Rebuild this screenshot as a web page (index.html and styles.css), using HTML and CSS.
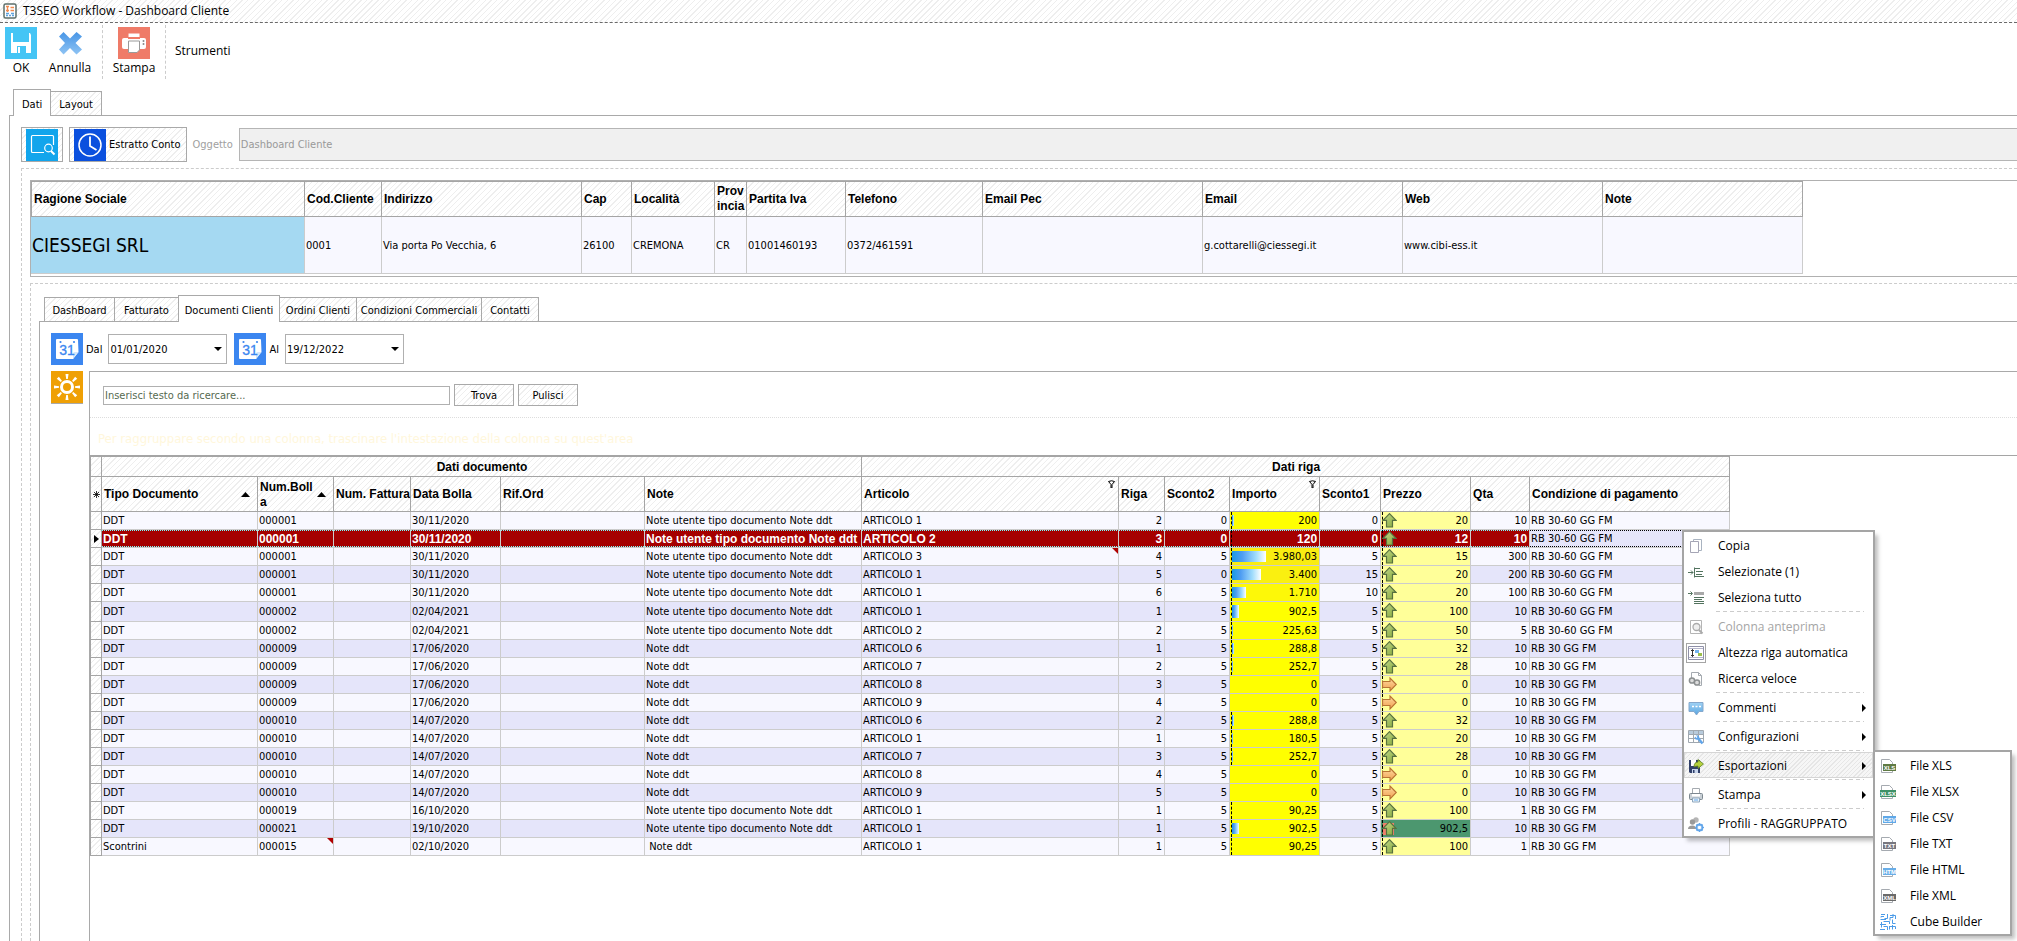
FILE: index.html
```html
<!DOCTYPE html>
<html lang="it">
<head>
<meta charset="utf-8">
<title>T3SEO Workflow - Dashboard Cliente</title>
<link rel="stylesheet" href="styles.css">
</head>
<body>
<svg class="defs" aria-hidden="true">
  <defs>
    <linearGradient id="green" x1="0" y1="0" x2="1" y2="1"><stop offset="0" stop-color="#c4d98a"/><stop offset="1" stop-color="#84a83c"/></linearGradient>
    <linearGradient id="orange" x1="0" y1="0" x2="0" y2="1"><stop offset="0" stop-color="#ffd9a0"/><stop offset="1" stop-color="#f0a050"/></linearGradient>
    <linearGradient id="blue" x1="0" y1="0" x2="0" y2="1"><stop offset="0" stop-color="#4795e6"/><stop offset="1" stop-color="#8fc4f4"/></linearGradient>
    <linearGradient id="bubble" x1="0" y1="0" x2="0" y2="1"><stop offset="0" stop-color="#9fd2f5"/><stop offset="1" stop-color="#5aa5e0"/></linearGradient>
  </defs>
  <symbol id="arrow-up" viewBox="0 0 15 15"><path d="M7.500 .7 14 7.300H10.500V14H4.500V7.300H1Z" fill="url(#green)" stroke="#56703f" stroke-width="1.200"/></symbol>
  <symbol id="arrow-side" viewBox="0 0 15 15"><path d="M14.300 7.500 8 1V4.500H.6V10.500H8V14Z" fill="url(#orange)" stroke="#b87333" stroke-width="1.100"/></symbol>
  <symbol id="calendar" viewBox="0 0 32 32"><rect width="32" height="32" fill="#3b86f0"/><path d="M6 6H26Q27 6 27 7L27.500 19 22 26H6Q5 26 5 25L5 7Q5 6 6 6Z" fill="#fff"/><path d="M27.500 19 22 26V20.500Q22 19 23.500 19Z" fill="#d5e6fc"/><circle cx="9.500" cy="9" r="1.100" fill="#3b86f0"/><circle cx="23" cy="9" r="1.100" fill="#3b86f0"/></symbol>
</svg>

<header class="titlebar hatch">
  <svg width="14" height="16" viewBox="0 0 14 16" aria-hidden="true"><rect x="1" y="1" width="12" height="14" rx="1.500" fill="#fff" stroke="#5c6f6b" stroke-width="1.500"/><path d="M3 3.500H6M7.500 4.500H11M4.500 4V9M3 7.500H6M7.500 7.500H11" stroke="#f08a50" stroke-width="1.300"/><path d="M3 10.500H6M8 10.500H11M3 12.500H5M6 12.500H8M9 12.500H11" stroke="#5fa3dd" stroke-width="1.300"/></svg>
  <h1>T3SEO Workflow - Dashboard Cliente</h1>
</header>

<nav class="toolbar">
  <button class="tool tool-ok"><svg width="32" height="32" viewBox="0 0 32 32" aria-hidden="true"><rect width="32" height="32" fill="#45c5f5"/><path d="M6 6H8V15H24V6H25L26 8V26H21V19H12V26H6Z" fill="#fff"/><path d="M13 20H15V26H13Z" fill="#fff"/></svg>OK</button>
  <button class="tool tool-cancel"><svg width="32" height="32" viewBox="0 0 32 32" aria-hidden="true"><path d="M9.500 5 16 11.500 22.500 5 28 9.500 21.500 16 28 22.500 22.500 27.500 16 21 9.500 27.500 5 22.500 11 16 5 9.500Z" fill="url(#blue)"/></svg>Annulla</button>
  <button class="tool tool-print"><svg width="32" height="32" viewBox="0 0 32 32" aria-hidden="true"><rect width="32" height="32" fill="#ef7b68"/><path d="M10.500 6.500H21.500V10H10.500Z" fill="#fff"/><rect x="4" y="11" width="24" height="11" rx="2" fill="#fff"/><path d="M10.500 14H21.500V23L19 25.500H10.500Z" fill="#fff" stroke="#9a9a9a"/><path d="M10 11.500H22" stroke="#ef7b68"/><circle cx="25.500" cy="14" r="1" fill="#888"/><circle cx="25.500" cy="17" r="1" fill="#888"/></svg>Stampa</button>
  <button class="tool-text">Strumenti</button>
</nav>

<div class="tabs tabs-main" role="tablist">
  <button class="tab active" role="tab" aria-selected="true">Dati</button>
  <button class="tab hatch" role="tab">Layout</button>
</div>

<main class="page">
  <div class="actions">
    <button class="action hatch" aria-label="Cerca"><svg width="32" height="32" viewBox="0 0 32 32" aria-hidden="true"><rect width="32" height="32" fill="#12a5ec"/><path d="M18 23.500H6.500Q5.500 23.500 5.500 22.500V7.500Q5.500 6.500 6.500 6.500H26.500Q27.500 6.500 27.500 7.500V16" fill="none" stroke="#fff" stroke-width="1.200"/><circle cx="22.500" cy="19" r="3.800" fill="none" stroke="#fff" stroke-width="1.200"/><path d="M25 22 28.500 25.500" stroke="#fff" stroke-width="2"/></svg></button>
    <button class="action hatch"><svg width="32" height="32" viewBox="0 0 32 32" aria-hidden="true"><rect width="32" height="32" fill="#0b50de"/><circle cx="16" cy="16" r="11" fill="none" stroke="#fff" stroke-width="1.500"/><path d="M16 7.500V17L22.500 21" fill="none" stroke="#fff" stroke-width="1.800"/></svg><span>Estratto Conto</span></button>
    <label for="subject">Oggetto</label>
    <input id="subject" class="subject" type="text" value="Dashboard Cliente" disabled>
  </div>

  <section class="outer">
    <div class="customer">
      <table class="customer-table">
        <colgroup><col class="w274"><col class="w77"><col class="w200"><col class="w50"><col class="w83"><col class="w32"><col class="w99"><col class="w137"><col class="w220"><col class="w200"><col class="w200"><col class="w200"></colgroup>
        <thead><tr class="hatch"><th>Ragione Sociale</th><th>Cod.Cliente</th><th>Indirizzo</th><th>Cap</th><th>Località</th><th>Prov<wbr>incia</th><th>Partita Iva</th><th>Telefono</th><th>Email Pec</th><th>Email</th><th>Web</th><th>Note</th></tr></thead>
        <tbody><tr><td class="company">CIESSEGI SRL</td><td>0001</td><td>Via porta Po Vecchia, 6</td><td>26100</td><td>CREMONA</td><td>CR</td><td>01001460193</td><td>0372/461591</td><td></td><td>g.cottarelli@ciessegi.it</td><td>www.cibi-ess.it</td><td></td></tr></tbody>
      </table>
    </div>

    <section class="inner">
      <div class="tabs tabs-inner" role="tablist">
        <button class="tab hatch w71" role="tab">DashBoard</button>
        <button class="tab hatch w65" role="tab">Fatturato</button>
        <button class="tab active w102" role="tab" aria-selected="true">Documenti Clienti</button>
        <button class="tab hatch w78" role="tab">Ordini Clienti</button>
        <button class="tab hatch w126" role="tab">Condizioni Commerciali</button>
        <button class="tab hatch w58" role="tab">Contatti</button>
      </div>
      <div class="panel">
        <div class="dates">
          <svg width="32" height="32" viewBox="0 0 32 32" aria-hidden="true"><use href="#calendar"/><text x="16" y="22" text-anchor="middle" class="cal-num">31</text></svg>
          <label for="from">Dal</label>
          <div class="combo"><select id="from"><option>01/01/2020</option></select><svg width="8" height="4" viewBox="0 0 8 4" aria-hidden="true"><path d="M0 0H8L4 4Z"/></svg></div>
          <svg width="32" height="32" viewBox="0 0 32 32" aria-hidden="true"><use href="#calendar"/><text x="16" y="22" text-anchor="middle" class="cal-num">31</text></svg>
          <label for="to">Al</label>
          <div class="combo"><select id="to"><option>19/12/2022</option></select><svg width="8" height="4" viewBox="0 0 8 4" aria-hidden="true"><path d="M0 0H8L4 4Z"/></svg></div>
        </div>
        <div class="grid-area">
          <button class="sun" aria-label="Opzioni"><svg width="32" height="32" viewBox="0 0 32 32" aria-hidden="true"><rect width="32" height="32" fill="#efa005"/><circle cx="16" cy="16" r="5.500" fill="none" stroke="#fff" stroke-width="3"/><g fill="#fff"><path id="ray" d="M14.500 3H17.500L16.800 8H15.200Z"/><use href="#ray" transform="rotate(45 16 16)"/><use href="#ray" transform="rotate(90 16 16)"/><use href="#ray" transform="rotate(135 16 16)"/><use href="#ray" transform="rotate(180 16 16)"/><use href="#ray" transform="rotate(225 16 16)"/><use href="#ray" transform="rotate(270 16 16)"/><use href="#ray" transform="rotate(315 16 16)"/></g></svg></button>
          <div class="grid">
            <form class="search">
              <input type="text" aria-label="Ricerca" placeholder="Inserisci testo da ricercare...">
              <button type="button" class="hatch">Trova</button>
              <button type="button" class="hatch">Pulisci</button>
            </form>
            <p class="group-hint">Per raggruppare secondo una colonna, trascinare l'intestazione della colonna su quest'area</p>
            <div class="table-frame">
              <table class="docs">
                <colgroup><col class="w12"><col class="w156"><col class="w76"><col class="w77"><col class="w90"><col class="w144"><col class="w217"><col class="w257"><col class="w46"><col class="w65"><col class="w90"><col class="w61"><col class="w90"><col class="w59"><col class="w200"></colgroup>
                <thead class="hatch">
                  <tr class="bands"><th></th><th colspan="6">Dati documento</th><th colspan="8">Dati riga</th></tr>
                  <tr class="heads">
                    <th class="mark"><svg width="7" height="7" viewBox="0 0 7 7" aria-hidden="true"><path d="M3.500 0V7M0 3.500H7M1 1 6 6M6 1 1 6" stroke="#000" stroke-width=".8"/></svg></th>
                    <th class="sorted">Tipo Documento<svg width="9" height="5" viewBox="0 0 9 5" aria-hidden="true"><path d="M0 5H9L4.500 0Z"/></svg></th>
                    <th class="sorted">Num.Boll<wbr>a<svg width="9" height="5" viewBox="0 0 9 5" aria-hidden="true"><path d="M0 5H9L4.500 0Z"/></svg></th>
                    <th class="single">Num. Fattura</th><th>Data Bolla</th><th>Rif.Ord</th><th>Note</th>
                    <th class="filtered">Articolo<svg width="7" height="8" viewBox="0 0 7 8" aria-hidden="true"><path d="M.5 1.500Q3.500 0 6.500 1.500L4 4.500V8H3V4.500Z" fill="none" stroke="#000"/></svg></th>
                    <th>Riga</th><th>Sconto2</th>
                    <th class="filtered">Importo<svg width="7" height="8" viewBox="0 0 7 8" aria-hidden="true"><path d="M.5 1.500Q3.500 0 6.500 1.500L4 4.500V8H3V4.500Z" fill="none" stroke="#000"/></svg></th>
                    <th>Sconto1</th><th>Prezzo</th><th>Qta</th><th>Condizione di pagamento</th>
                  </tr>
                </thead>
                <tbody id="rows"></tbody>
              </table>
            </div>
          </div>
        </div>
      </div>
    </section>
  </section>
</main>

<ul class="menu menu-context">
  <li><button><svg width="16" height="16" viewBox="0 0 16 16" aria-hidden="true"><path d="M5.500 1.500H13.500V12.500H5.500Z" fill="#fff" stroke="#a9b3c0"/><path d="M2.500 3.500H10.500V14.500H2.500Z" fill="#fff" stroke="#a5a5b5"/></svg>Copia</button></li>
  <li><button><svg width="16" height="16" viewBox="0 0 16 16" aria-hidden="true"><path d="M0 8.500H5M3 6.500 5 8.500 3 10.500M6.500 3.500V13.500M7 4.500H12M8 7.500H15M8 10.500H14M7 12.500H16" fill="none" stroke="#53735f"/></svg>Selezionate (1)</button></li>
  <li><button><svg width="16" height="16" viewBox="0 0 16 16" aria-hidden="true"><path d="M0 3.500H4M2.500 1.500 4.500 3.500 2.500 5.500M6 7.500H16M6 9.500H14M6 11.500H16M6 13.500H16" fill="none" stroke="#53735f"/><path d="M6 2H16V5H6Z" fill="#a9a9a9"/></svg>Seleziona tutto</button></li>
  <li class="sep" role="separator"></li>
  <li><button disabled><svg width="16" height="16" viewBox="0 0 16 16" aria-hidden="true"><path d="M2.500 1.500H13.500V14.500H2.500Z" fill="#fff" stroke="#b5b5b5"/><circle cx="8.500" cy="8" r="3.500" fill="#eee" stroke="#aaa" stroke-width="1.300"/><path d="M11 11 14.500 14.500" stroke="#aaa" stroke-width="2"/></svg>Colonna anteprima</button></li>
  <li><button><svg class="checked" width="20" height="20" viewBox="0 0 20 20" aria-hidden="true"><rect x=".5" y=".5" width="19" height="19" fill="#fff" stroke="#a5a5a5"/><path d="M2.500 3.500H17.500V16.500H2.500Z" fill="#fff" stroke="#8f90a8"/><path d="M3 5.500H17M3 14.500H17" stroke="#b5b5cc"/><path d="M6.500 6.500V13.500M5 8 6.500 6.500 8 8M5 12 6.500 13.500 8 12" fill="none" stroke="#333"/><path d="M9 7H13V10H9Z" fill="#72b3ee"/><path d="M12 10H16V13H12Z" fill="#9bbf4a"/></svg>Altezza riga automatica</button></li>
  <li><button><svg width="16" height="16" viewBox="0 0 16 16" aria-hidden="true"><path d="M3.500 7V1.500H10.500L13.500 4.500V14.500H11" fill="#fff" stroke="#a5aab0"/><path d="M10.500 1.500V4.500H13.500" fill="none" stroke="#a5aab0"/><circle cx="4" cy="9.500" r="2.600" fill="#ddd" stroke="#8b8f90" stroke-width="1.500"/><circle cx="9" cy="11.500" r="2.600" fill="#ddd" stroke="#8b8f90" stroke-width="1.500"/></svg>Ricerca veloce</button></li>
  <li class="sep" role="separator"></li>
  <li><button><svg width="16" height="16" viewBox="0 0 16 16" aria-hidden="true"><path d="M1 2.500H15V11.500H11L8.500 15 6 11.500H1Z" fill="url(#bubble)" stroke="#85a8cc"/><path d="M4 6.500H6M7.500 6.500H9.500M11 6.500H13" stroke="#fff" stroke-width="1.500"/></svg>Commenti<i class="more"></i></button></li>
  <li class="sep" role="separator"></li>
  <li><button><svg width="16" height="16" viewBox="0 0 16 16" aria-hidden="true"><path d="M.5 1.500H15.500V13.500H.5Z" fill="#fff" stroke="#a0a8b0"/><path d="M1 2H15V5H1Z" fill="#b8cbdc"/><path d="M.5 5.500H15.500M.5 9.500H15.500M5.500 1.500V13.500M10.500 1.500V13.500" stroke="#a0a8b0"/><path d="M9 8 14.500 14.500" stroke="#61a5ea" stroke-width="2.500"/><circle cx="9" cy="8.500" r="2.300" fill="#61a5ea"/><path d="M7 6.500 9 8.500" stroke="#fff" stroke-width="1.500"/></svg>Configurazioni<i class="more"></i></button></li>
  <li class="sep" role="separator"></li>
  <li><button class="current"><svg width="16" height="16" viewBox="0 0 16 16" aria-hidden="true"><path d="M1 2H12V15H2L1 14Z" fill="#31406a"/><path d="M3 2H8V8H3Z" fill="#fff"/><path d="M4 11H10V15H4Z" fill="#c7d5ec"/><path d="M5 12H6.500V15H5Z" fill="#31406a"/><path d="M6 9Q6 4 10 4V1.500L15.500 6 10 10.500V8Q7.500 8 6 9Z" fill="#b5d13c" stroke="#5c7d24" stroke-width=".8"/></svg>Esportazioni<i class="more"></i></button></li>
  <li class="sep" role="separator"></li>
  <li><button><svg width="16" height="16" viewBox="0 0 16 16" aria-hidden="true"><path d="M4.500 1.500H11.500V8H4.500Z" fill="#fff" stroke="#a5aab0"/><rect x="1.500" y="6.500" width="13" height="6" rx="1" fill="#c9d0d6" stroke="#7d8890"/><path d="M4 7H12V9.500H4Z" fill="#fff"/><path d="M4.500 11H11.500V15H4.500Z" fill="#eaf4fc" stroke="#8fa7bd"/><path d="M6 13H10" stroke="#61a5ea"/></svg>Stampa<i class="more"></i></button></li>
  <li class="sep" role="separator"></li>
  <li><button><svg width="16" height="16" viewBox="0 0 16 16" aria-hidden="true"><circle cx="8" cy="4" r="2.700" fill="#b5b5b5"/><circle cx="4.500" cy="6" r="2.700" fill="#999"/><path d="M0 13Q0 9.500 4.500 9.500 8 9.500 8 13Z" fill="#999"/><circle cx="11.500" cy="11.500" r="3" fill="#fff" stroke="#61a5ea" stroke-width="1.800"/><path d="M11.500 7V16M7 11.500H16M8.500 8.500 14.500 14.500M14.500 8.500 8.500 14.500" stroke="#61a5ea"/><circle cx="11.500" cy="11.500" r="1.800" fill="#fff"/></svg>Profili - RAGGRUPPATO</button></li>
</ul>

<ul class="menu menu-sub" id="exports"></ul>

<script src="app.js"></script>
</body>
</html>
```
FILE: app.js
```js
const ddt = "Note utente tipo documento Note ddt";
const rb60 = "RB 30-60 GG FM";
const rb30 = "RB 30 GG FM";

// type, number, date, note, item, line, discount 2, amount, bar width, discount 1, price, quantity, payment
const rows = [
  ["DDT", "000001", "30/11/2020", ddt, "ARTICOLO 1", 2, 0, "200", 2, 0, "20", 10, rb60],
  ["DDT", "000001", "30/11/2020", ddt, "ARTICOLO 2", 3, 0, "120", 0, 0, "12", 10, rb60],
  ["DDT", "000001", "30/11/2020", ddt, "ARTICOLO 3", 4, 5, "3.980,03", 34, 5, "15", 300, rb60],
  ["DDT", "000001", "30/11/2020", ddt, "ARTICOLO 1", 5, 0, "3.400", 29, 15, "20", 200, rb60],
  ["DDT", "000001", "30/11/2020", ddt, "ARTICOLO 1", 6, 5, "1.710", 14, 10, "20", 100, rb60],
  ["DDT", "000002", "02/04/2021", ddt, "ARTICOLO 1", 1, 5, "902,5", 7, 5, "100", 10, rb60],
  ["DDT", "000002", "02/04/2021", ddt, "ARTICOLO 2", 2, 5, "225,63", 1, 5, "50", 5, rb60],
  ["DDT", "000009", "17/06/2020", "Note ddt", "ARTICOLO 6", 1, 5, "288,8", 2, 5, "32", 10, rb30],
  ["DDT", "000009", "17/06/2020", "Note ddt", "ARTICOLO 7", 2, 5, "252,7", 1, 5, "28", 10, rb30],
  ["DDT", "000009", "17/06/2020", "Note ddt", "ARTICOLO 8", 3, 5, "0", 0, 5, "0", 10, rb30],
  ["DDT", "000009", "17/06/2020", "Note ddt", "ARTICOLO 9", 4, 5, "0", 0, 5, "0", 10, rb30],
  ["DDT", "000010", "14/07/2020", "Note ddt", "ARTICOLO 6", 2, 5, "288,8", 2, 5, "32", 10, rb30],
  ["DDT", "000010", "14/07/2020", "Note ddt", "ARTICOLO 1", 1, 5, "180,5", 1, 5, "20", 10, rb30],
  ["DDT", "000010", "14/07/2020", "Note ddt", "ARTICOLO 7", 3, 5, "252,7", 1, 5, "28", 10, rb30],
  ["DDT", "000010", "14/07/2020", "Note ddt", "ARTICOLO 8", 4, 5, "0", 0, 5, "0", 10, rb30],
  ["DDT", "000010", "14/07/2020", "Note ddt", "ARTICOLO 9", 5, 5, "0", 0, 5, "0", 10, rb30],
  ["DDT", "000019", "16/10/2020", ddt, "ARTICOLO 1", 1, 5, "90,25", 0, 5, "100", 1, rb30],
  ["DDT", "000021", "19/10/2020", ddt, "ARTICOLO 1", 1, 5, "902,5", 7, 5, "902,5", 10, rb30],
  ["Scontrini", "000015", "02/10/2020", "\u00a0Note ddt", "ARTICOLO 1", 1, 5, "90,25", 0, 5, "100", 1, rb30]
];
const shades = { 2: "shade-high", 3: "shade-mid", 4: "shade-low" };

document.getElementById("rows").innerHTML = rows.map((r, i) => {
  const [type, num, date, note, item, line, d2, amount, bar, d1, price, qty, pay] = r;
  const selected = i === 1;
  const corner = '<i class="corner"></i>';
  const arrow = price === "0" ? "side" : "up";
  const pointer = selected ? '<svg width="5" height="8" viewBox="0 0 5 8" aria-hidden="true"><path d="M0 0 5 4 0 8Z"/></svg>' : "";
  return `<tr class="${selected ? "selected" : ""} ${i === 5 ? "tall" : ""}">
    <td class="mark hatch">${pointer}</td>
    <td>${type}</td><td>${num}${i === 18 ? corner : ""}</td><td></td><td>${date}</td><td></td>
    <td>${note}</td><td>${item}${i === 2 ? corner : ""}</td>
    <td class="num">${line}</td><td class="num">${d2}</td>
    <td class="num amount ${amount === "0" ? "" : "axis"} ${shades[i] || ""}"><i class="bar" style="width:${bar}px"></i>${amount}</td>
    <td class="num">${d1}</td>
    <td class="num price axis ${i === 17 ? "peak" : ""}"><svg width="15" height="15" aria-hidden="true"><use href="#arrow-${arrow}"/></svg>${price}</td>
    <td class="num">${qty}</td><td class="pay">${pay}</td></tr>`;
}).join("");

const formats = [["XLS", "#5f7a43"], ["XLSX", "#3f9168"], ["CSV", "#5fa8e8"], ["TXT", "#77777f"], ["HTML", "#6aaee8"], ["XML", "#6a6a6a"]];
document.getElementById("exports").innerHTML = formats.map(([name, color]) => {
  const tag = name === "HTML" ? "HTM" : name;
  const x = tag.length === 4 ? 0 : 3;
  return `<li><button><svg width="16" height="16" viewBox="0 0 16 16" aria-hidden="true">
    <path d="M1.500 1.500H9.500L12.500 4.500V14.500H1.500Z" fill="#fff" stroke="#a5aab0"/>
    <rect x="${x}" y="6" width="${16 - x}" height="7" fill="${color}"/>
    <text class="tag" x="${x + (16 - x) / 2}" y="12" text-anchor="middle">${tag}</text></svg>File ${name}</button></li>`;
}).join("") + `<li><button><svg width="16" height="16" viewBox="0 0 16 16" aria-hidden="true">
  <path d="M1 .5H5M7.500 0V4.500H4.500M1 3.500V2.500H4M.5 5.500H6M10 1.500H15.500V5M13 0V3.500H10V6.500M1.500 8V13.500M3.500 7.500H9.500V10M0 10.500H6M12.500 5.500V9.500H15.500M3.500 12.500H7.500V16M9.500 12V15.500M9.500 12.500H15.500V15M12.500 11V15.500M0 15.500H5" fill="none" stroke="#4b9be8"/></svg>Cube Builder</button></li>`;
```
FILE: styles.css
```css
* { box-sizing: border-box; }
body {
  margin: 0;
  min-height: 100vh;
  display: flex;
  flex-direction: column;
  position: relative;
  overflow: hidden;
  background: #fff;
  color: #000;
  font: 11px/15px "DejaVu Sans Condensed", "Noto Sans", sans-serif;
}
button, input, select { font: inherit; color: inherit; border-radius: 0; margin: 0; }
button { background: none; border: 0; padding: 0; }
svg { display: block; flex: none; }
.defs { position: absolute; width: 0; height: 0; }
.cal-num { font: 14px "Liberation Sans", sans-serif; fill: #3b86f0; stroke: #3b86f0; stroke-width: .3px; }
.tag { font: bold 6px "Liberation Sans", sans-serif; fill: #fff; }
.hatch { background: repeating-linear-gradient(135deg, #fff 0 3px, #eee 3px 4px); }

.titlebar {
  display: flex;
  align-items: center;
  gap: 6px;
  height: 23px;
  padding: 0 3px;
  border-bottom: 1px dashed #6a6a6a;
}
.titlebar h1 { margin: 0; font: 12px/16px "Open Sans", sans-serif; }

.toolbar { display: flex; height: 66px; padding-top: 2px; font: 12px/16px "Open Sans", sans-serif; }
.tool { display: flex; flex-direction: column; align-items: center; gap: 1px; height: 54px; padding-top: 2px; }
.tool-ok { width: 42px; }
.tool-cancel { width: 61px; padding-right: 4px; border-right: 1px dashed #ccc; }
.tool-print { width: 63px; border-right: 1px dashed #ccc; }
.tool-text { height: 52px; padding: 0 9px; }

.tabs { display: flex; align-items: flex-end; height: 26px; }
.tabs-main { padding-left: 13px; }
.tabs-inner { padding-left: 13px; }
.tab { height: 24px; padding: 2px 0 0; border: 1px solid #a9a9a9; border-bottom: 0; margin-left: -1px; white-space: nowrap; }
.tabs-main .tab { padding: 2px 8px 0; }
.tab:first-child { margin-left: 0; }
.tab.active { height: 27px; margin-bottom: -1px; background: #fff; position: relative; }

.page {
  flex: 1;
  display: flex;
  flex-direction: column;
  margin-left: 9px;
  padding: 11px 0 0 11px;
  border: solid #a9a9a9;
  border-width: 1px 0 0 1px;
}
.actions { display: flex; align-items: center; gap: 6px; }
.action { display: flex; align-items: center; height: 35px; padding: 0 4px; border: 1px solid #a9a9a9; }
.action span { padding: 0 1px 0 3px; }
.actions label { color: #a0a0a0; }
.subject { flex: 1; height: 33px; padding: 0 1px; border: 1px solid #b5b5b5; border-right: 0; background: #f0f0f0; color: #999; }

.outer {
  flex: 1;
  display: flex;
  flex-direction: column;
  gap: 6px;
  margin-top: 6px;
  padding: 11px 0 0 8px;
  border: dashed #ccc;
  border-width: 1px 0 0 1px;
}
.customer { padding-bottom: 2px; border: solid #b0b0b0; border-width: 1px 0 1px 1px; }
table { table-layout: fixed; width: 0; border-collapse: separate; border-spacing: 0; }
th, td { padding: 0 2px 0 1px; text-align: left; border: solid #ccc; border-width: 0 1px 1px 0; white-space: nowrap; position: relative; }
th { padding: 0 1px 0 2px; font: bold 12px/15px "Liberation Sans", sans-serif; border-color: #a5a5a5; white-space: normal; }
.customer-table th { height: 36px; border-top-width: 1px; }
.customer-table th:first-child { border-left-width: 1px; }
.customer-table td { height: 57px; background: #f8f8ff; }
.customer-table .company { background: #a5d9f2; font-size: 19px; }

.w12 { width: 12px; } .w32 { width: 32px; } .w46 { width: 46px; } .w50 { width: 50px; }
.w58 { width: 58px; } .w59 { width: 59px; } .w61 { width: 61px; } .w65 { width: 65px; }
.w71 { width: 71px; } .w76 { width: 76px; } .w77 { width: 77px; } .w78 { width: 78px; }
.w83 { width: 83px; } .w90 { width: 90px; } .w99 { width: 99px; } .w102 { width: 102px; }
.w126 { width: 126px; } .w137 { width: 137px; } .w144 { width: 144px; } .w156 { width: 156px; }
.w200 { width: 200px; } .w217 { width: 217px; } .w220 { width: 220px; } .w257 { width: 257px; }
.w274 { width: 274px; }

.inner {
  flex: 1;
  display: flex;
  flex-direction: column;
  padding: 11px 0 0 0;
  border: dashed #ccc;
  border-width: 1px 0 0 1px;
}
.panel {
  flex: 1;
  display: flex;
  flex-direction: column;
  gap: 6px;
  margin-left: 8px;
  padding: 11px 0 0 11px;
  border: solid #a9a9a9;
  border-width: 1px 0 0 1px;
}
.dates { display: flex; align-items: center; }
.dates label { padding: 0 6px 0 3px; }
.combo { position: relative; width: 119px; margin-right: 7px; }
.combo select { display: block; appearance: none; width: 100%; height: 30px; padding: 0 1px; border: 1px solid #b0b0b0; background: #fff; }
.combo svg { position: absolute; right: 5px; top: 13px; pointer-events: none; }
.grid-area { flex: 1; display: flex; gap: 6px; }
.sun { align-self: flex-start; border-bottom: 1px solid #a9a9a9; }
.grid { flex: 1; min-width: 0; border: solid #a9a9a9; border-width: 1px 0 0 1px; }
.search { display: flex; align-items: center; gap: 4px; height: 46px; padding: 1px 13px 0; border-bottom: 1px dotted #ddd; }
.search input { width: 347px; height: 19px; padding: 0 1px; border: 1px solid #b0b0b0; }
.search input::placeholder { color: #566a50; opacity: 1; }
.search button { width: 60px; height: 22px; border: 1px solid #a9a9a9; }
.group-hint { margin: 0; height: 37px; padding: 13px 8px 0; color: #fff7dc; font-size: 13px; }
.table-frame { border-top: 1px solid #a5a5a5; }

.docs th { padding-top: 1px; }
.docs .bands th { height: 21px; border-top-width: 1px; text-align: center; }
.docs tr > th:first-child { border-left-width: 1px; }
.docs .heads th { height: 35px; }
.docs .heads .single { padding-right: 0; white-space: nowrap; }
.docs .mark { padding: 0 1px; border-color: #a5a5a5; }
.docs .heads .sorted { padding-right: 16px; }
.sorted svg { position: absolute; right: 7px; top: 15px; }
.filtered svg { position: absolute; right: 3px; top: 3px; }
.docs td { height: 18px; padding-top: 1px; line-height: 16px; background-color: #f8f8ff; }
.docs tr:nth-child(even) td:not(.mark) { background-color: #e5e5fa; }
.docs .tall td { height: 20px; }
.docs td.mark { background-color: #fff; border-left: 1px solid #a5a5a5; }
.docs .mark svg { margin: 0 auto; }
.docs td.num { text-align: right; }
.docs tr td.amount.amount { background-color: #ff0; }
.docs tr td.shade-high.shade-high { background-color: #f9ec12; }
.docs tr td.shade-mid.shade-mid { background-color: #faf010; }
.docs tr td.shade-low.shade-low { background-color: #fdf808; }
.docs tr td.price.price { background-color: #ff9; }
.docs tr td.peak.peak { background-color: #4c976f; }
.axis::before { content: ""; position: absolute; left: 1px; top: 0; bottom: 0; border-left: 1px dashed #000; }
.bar { position: absolute; left: 2px; top: 3px; bottom: 3px; background: linear-gradient(90deg, #189ae6, #4f9df2 30%, #9fdcfc 70%, #fff); }
.price svg { position: absolute; left: 1px; top: 1px; }
.peak svg { background: linear-gradient(#f0806a, #f0806a) 1px 2px / 11px 12px no-repeat; }
.corner { position: absolute; right: 0; top: 0; width: 6px; height: 6px; background: #b00000; clip-path: polygon(0 0, 100% 0, 100% 100%); }
.docs tr.selected td:not(.mark):not(.pay) {
  background: repeating-linear-gradient(90deg, #7ff 0 1px, transparent 1px 2px) top / 100% 1px no-repeat,
    repeating-linear-gradient(90deg, #7ff 0 1px, transparent 1px 2px) bottom / 100% 1px no-repeat, #a50000;
  color: #fff;
  font: bold 12px/16px "Liberation Sans", sans-serif;
}
.docs tr.selected td.pay {
  background: repeating-linear-gradient(90deg, #000 0 1px, transparent 1px 2px) top / 100% 1px no-repeat,
    repeating-linear-gradient(90deg, #000 0 1px, transparent 1px 2px) bottom / 100% 1px no-repeat, #e5e5fa;
}

.menu {
  position: absolute;
  margin: 0;
  padding: 0;
  list-style: none;
  border: 2px solid #a5a5a5;
  background: #fff;
  box-shadow: 4px 4px 4px -1px rgba(0, 0, 0, .25);
  font: 12px/16px "Open Sans", sans-serif;
}
.menu-context { left: 1682px; top: 530px; width: 193px; }
.menu-sub { left: 1873px; top: 750px; width: 139px; }
.menu button { display: flex; align-items: center; gap: 14px; width: 100%; height: 26px; padding: 1px 7px 0 4px; text-align: left; white-space: nowrap; }
.menu-sub button { padding-left: 5px; }
.menu button:disabled { color: #a5a5a5; }
.menu .checked { margin: 0 -2px; }
.menu .current { background: repeating-linear-gradient(135deg, #f6f6f6 0 2px, #e6e6e6 2px 3px); outline: 1px solid #d5d5d5; outline-offset: -1px; }
.more { margin-left: auto; border: solid transparent; border-width: 4px 0 4px 4px; border-left-color: #000; }
.sep { height: 3px; margin: 0 9px 0 32px; background: repeating-linear-gradient(90deg, #ccc 0 4px, transparent 4px 7px) 0 1px / 100% 1px no-repeat; }
```
